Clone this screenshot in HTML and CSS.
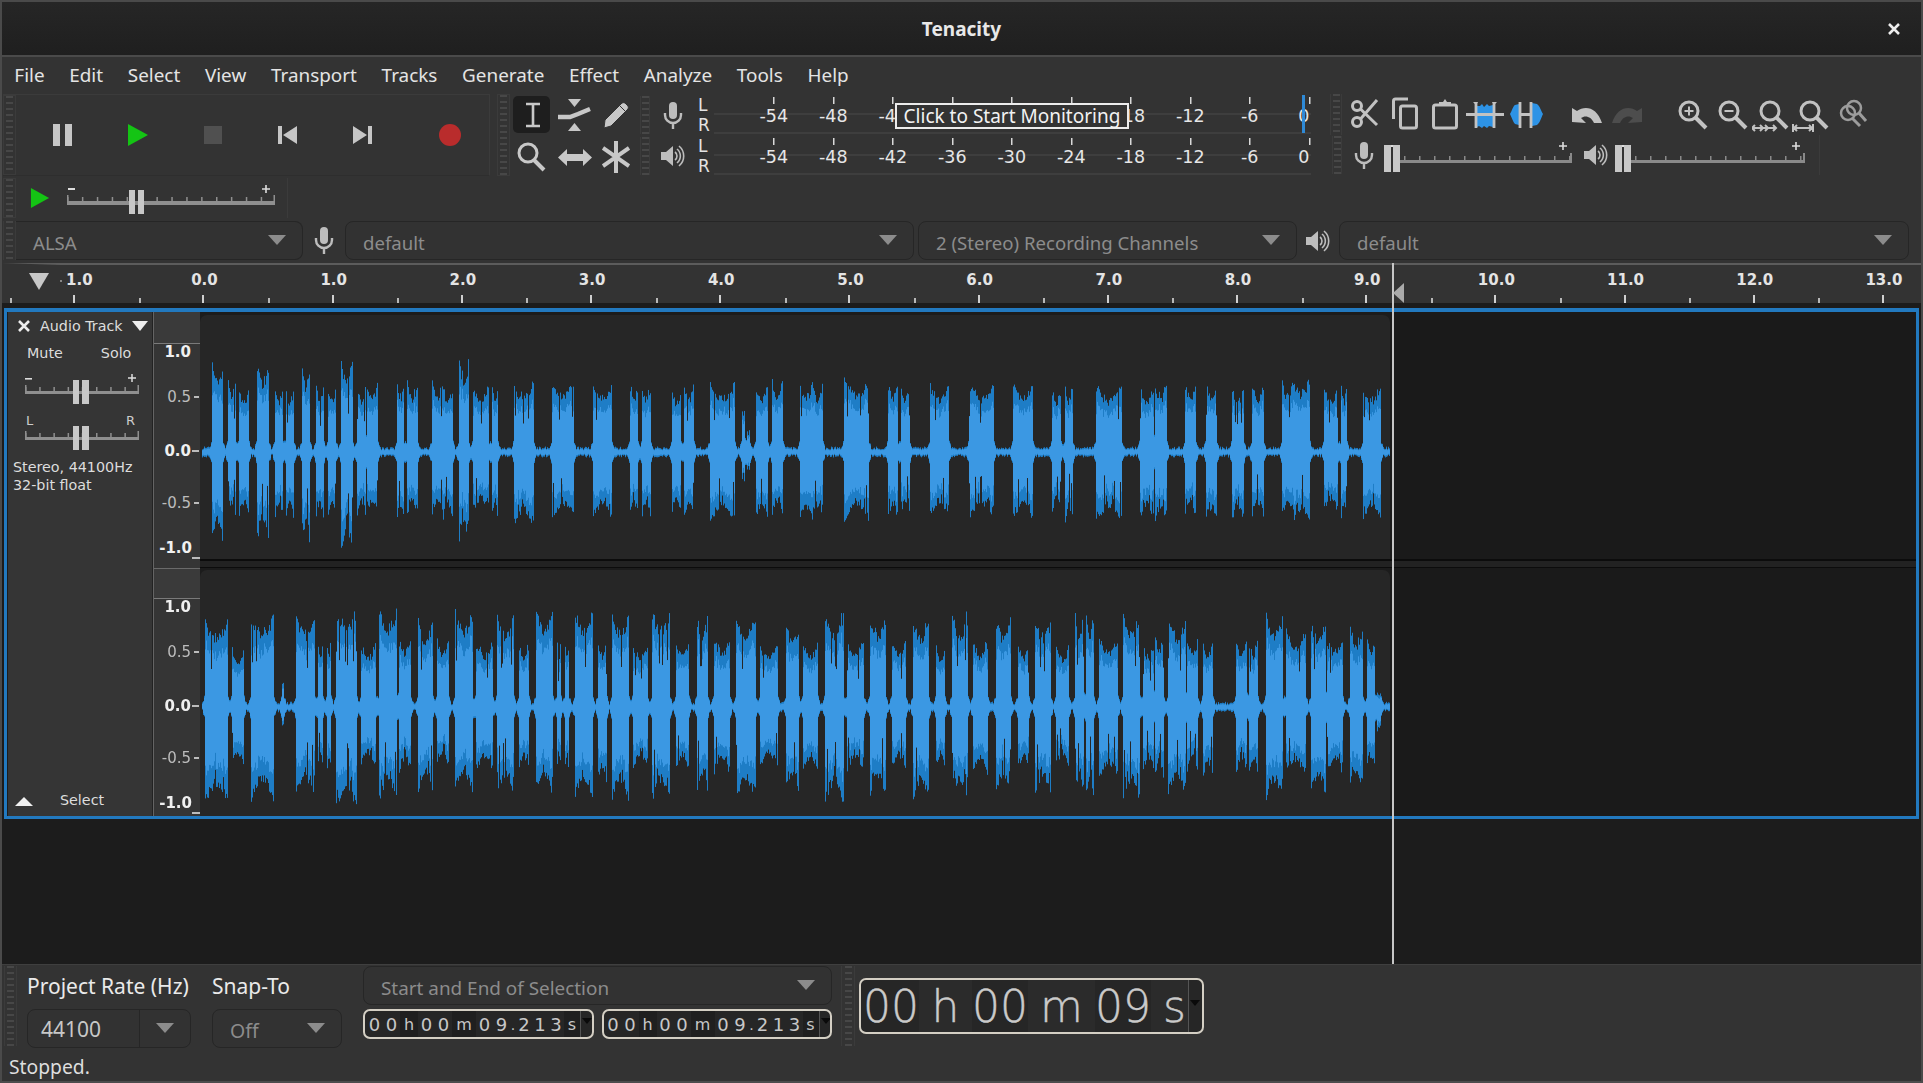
FILE: index.html
```html
<!DOCTYPE html>
<html lang="en">
<head>
<meta charset="utf-8">
<title>Tenacity</title>
<link rel="stylesheet" href="styles.css">
</head>
<body>
<svg class="sprite" aria-hidden="true">
  <symbol id="mic" viewBox="0 0 20 27">
    <rect x="6" y="0" width="8" height="17" rx="4" fill="currentColor"/>
    <path d="M2 11v2a8 8 0 0 0 16 0v-2M10 21v6" fill="none" stroke="currentColor" stroke-width="2.4"/>
  </symbol>
  <symbol id="spk" viewBox="0 0 24 24">
    <path d="M0 8h5l7-6v20l-7-6H0z" fill="currentColor"/>
    <path d="M14 8a5 5 0 0 1 0 8M16 5a9 9 0 0 1 0 14M18 2a13 13 0 0 1 0 20" fill="none" stroke="currentColor" stroke-width="1.6"/>
  </symbol>
  <symbol id="play" viewBox="0 0 20 22">
    <path d="M0 0l20 11L0 22z" fill="#14c414"/>
  </symbol>
</svg>
<div class="app">
  <header class="titlebar">
    <span class="title">Tenacity</span>
    <svg class="close" viewBox="0 0 12 12"><path d="M1 1l10 10M11 1L1 11" stroke="currentColor" stroke-width="2.6" fill="none"/></svg>
  </header>
  <nav class="menubar">
    <span>File</span><span>Edit</span><span>Select</span><span>View</span><span>Transport</span><span>Tracks</span><span>Generate</span><span>Effect</span><span>Analyze</span><span>Tools</span><span>Help</span>
  </nav>

  <div class="toprow">
    <div class="toolbar transport">
      <div class="grip"></div>
      <div class="tbtns">
        <div class="tbtn"><svg width="19" height="22" viewBox="0 0 19 22"><path d="M0 0h7v22H0zM12 0h7v22h-7z" fill="#c6c6c6"/></svg></div>
        <div class="tbtn"><svg width="20" height="22"><use href="#play"/></svg></div>
        <div class="tbtn"><svg width="18" height="18" viewBox="0 0 18 18"><rect width="18" height="18" fill="#505050"/></svg></div>
        <div class="tbtn"><svg width="19" height="18" viewBox="0 0 19 18"><path d="M0 0h4v18H0zM19 0v18L5 9z" fill="#c6c6c6"/></svg></div>
        <div class="tbtn"><svg width="19" height="18" viewBox="0 0 19 18"><path d="M15 0h4v18h-4zM0 0v18l14-9z" fill="#c6c6c6"/></svg></div>
        <div class="tbtn rec"><svg width="22" height="22" viewBox="0 0 22 22"><circle cx="11" cy="11" r="11" fill="#b92c2c"/></svg></div>
      </div>
    </div>
    <div class="toolbar tools">
      <div class="grip"></div>
      <div class="toolgrid">
        <div class="tool active"><svg width="16" height="26" viewBox="0 0 16 26"><path d="M1 2h14M1 24h14M8 2v22" stroke="currentColor" stroke-width="2.6" fill="none"/></svg></div>
        <div class="tool"><svg width="36" height="34" viewBox="0 0 36 34"><path d="M11 1h13l-6.500 8zM11 33h13l-6.500-8z" fill="currentColor"/><path d="M1 19h12l8-3 12-5" stroke="currentColor" stroke-width="4.400" fill="none"/></svg></div>
        <div class="tool"><svg width="28" height="28" viewBox="0 0 28 28"><path d="M3 19L19 3a3 3 0 0 1 5 0l1 1a3 3 0 0 1 0 5L9 25l-7 2zM18 5l5 5" fill="currentColor" stroke="#333" stroke-width="1"/></svg></div>
        <div class="tool lens"><svg width="30" height="30" viewBox="0 0 30 30"><circle cx="12" cy="11" r="9" fill="none" stroke="currentColor" stroke-width="3"/><path d="M18 18l10 10" stroke="currentColor" stroke-width="4" fill="none"/></svg></div>
        <div class="tool"><svg width="34" height="17" viewBox="0 0 34 17"><path d="M0 8.500L9 0v5h16V0l9 8.500L25 17v-5H9v5z" fill="currentColor"/></svg></div>
        <div class="tool"><svg width="28" height="32" viewBox="0 0 28 32"><path d="M14 0v32M1 7l26 18M27 7L1 25" stroke="currentColor" stroke-width="4" fill="none"/></svg></div>
      </div>
    </div>
    <div class="rightstack">
      <div class="stackrow">
        <div class="meter">
          <div class="grip meter-grip"></div>
          <div class="meter-icon"><svg width="20" height="27"><use href="#mic"/></svg></div>
          <div class="lr"><span>L</span><span>R</span></div>
          <div class="scale">
            <span>-54</span><span>-48</span><span>-42</span><span>-36</span><span>-30</span><span>-24</span><span>-18</span><span>-12</span><span>-6</span><span class="zero">0</span>
            <div class="peak"></div>
            <div class="monitor">Click to Start Monitoring</div>
          </div>
        </div>
        <div class="toolbar edit">
          <div class="grip small"></div>
          <div class="editbtns">
            <div class="ebtn"><svg width="40" height="40" viewBox="0 0 40 40"><g fill="none" stroke="currentColor" stroke-width="3"><circle cx="12" cy="12" r="4.500"/><circle cx="12" cy="28" r="4.500"/><path d="M15.500 15L32 31M15.500 25L32 6"/></g></svg></div>
            <div class="ebtn"><svg width="40" height="40" viewBox="0 0 40 40"><g fill="none" stroke="currentColor" stroke-width="3"><path d="M8.500 25V7a2 2 0 0 1 2-2H23"/><rect x="15.500" y="12" width="16" height="22" rx="2"/></g></svg></div>
            <div class="ebtn"><svg width="40" height="40" viewBox="0 0 40 40"><rect x="8.500" y="11" width="23" height="23" rx="2" fill="none" stroke="currentColor" stroke-width="3"/><path d="M14 12v-4h4l2-3 2 3h4v4z" fill="currentColor"/></svg></div>
            <div class="ebtn"><svg width="40" height="40" viewBox="0 0 40 40"><path d="M6 8h2l3 3 2-3zM34 8h-2l-3 3-2-3z" fill="currentColor"/><path d="M12 12h3l2-2 2 3 3-3 2 2 4-1v22l-4-1-2 2-3-2-2 2-3-2-2 1z" fill="#2d93e6"/><path d="M1 20.500h38M11 8v26M29 8v26" stroke="currentColor" stroke-width="2.800" fill="none"/></svg></div>
            <div class="ebtn"><svg width="40" height="40" viewBox="0 0 40 40"><path d="M5 20c2-3 3-8 5-9l4-1v21l-4-1c-2-2-3-6-5-10zM38 20c-2-3-3-8-6-10l-5-1v23l5-1c3-2 4-7 6-11z" fill="#2d93e6"/><path d="M15 8v26M26 8v26M15 20.500h11" stroke="currentColor" stroke-width="2.800" fill="none"/></svg></div>
            <div class="ebtn gap-a"><svg width="40" height="40" viewBox="0 0 40 40"><path d="M5 28V14l5 3c8-6 20-4 25 12h-8c-3-7-9-8-13-5l5 5z" fill="currentColor"/></svg></div>
            <div class="ebtn dim"><svg width="40" height="40" viewBox="0 0 40 40"><path d="M35 28V14l-5 3c-8-6-20-4-25 12h8c3-7 9-8 13-5l-5 5z" fill="currentColor"/></svg></div>
            <div class="ebtn gap-b"><svg width="40" height="40" viewBox="0 0 40 40"><g fill="none" stroke="currentColor" stroke-width="3"><circle cx="17" cy="17" r="9"/><path d="M23.500 23.500L34 34" stroke-width="4"/><path d="M17 12.500v9M12.500 17h9" stroke-width="2"/></g></svg></div>
            <div class="ebtn"><svg width="40" height="40" viewBox="0 0 40 40"><g fill="none" stroke="currentColor" stroke-width="3"><circle cx="17" cy="17" r="9"/><path d="M23.500 23.500L34 34" stroke-width="4"/><path d="M12.500 17h9" stroke-width="2"/></g></svg></div>
            <div class="ebtn"><svg width="40" height="40" viewBox="0 0 40 40"><g fill="none" stroke="currentColor" stroke-width="3"><circle cx="18" cy="17" r="9"/><path d="M24.500 23.500L35 34" stroke-width="4"/><path d="M0 34h24M3 31l-3 3 3 3M8 31l3 3-3 3M13 31l3 3-3 3M21 31l3 3-3 3" stroke-width="2"/></g></svg></div>
            <div class="ebtn"><svg width="40" height="40" viewBox="0 0 40 40"><g fill="none" stroke="currentColor" stroke-width="3"><circle cx="18" cy="17" r="9"/><path d="M24.500 23.500L35 34" stroke-width="4"/><path d="M1 30v8M1 34h20M21 30v8M5 31l-3 3 3 3M17 31l3 3-3 3" stroke-width="2"/></g></svg></div>
            <div class="ebtn soft"><svg width="40" height="40" viewBox="0 0 40 40"><g fill="none" stroke="currentColor" stroke-width="2.500"><circle cx="16" cy="19" r="7"/><circle cx="22" cy="14" r="7"/><path d="M20 24l8 8M27 19l7 8" stroke-width="3"/></g></svg></div>
          </div>
        </div>
      </div>
      <div class="stackrow">
        <div class="meter">
          <div class="grip meter-grip"></div>
          <div class="meter-icon"><svg width="24" height="24"><use href="#spk"/></svg></div>
          <div class="lr"><span>L</span><span>R</span></div>
          <div class="scale">
            <span>-54</span><span>-48</span><span>-42</span><span>-36</span><span>-30</span><span>-24</span><span>-18</span><span>-12</span><span>-6</span><span class="zero">0</span>
          </div>
        </div>
        <div class="toolbar mixer">
          <div class="grip small"></div>
          <svg class="mix-mic" width="20" height="27"><use href="#mic"/></svg>
          <svg class="fader" width="190" height="30" viewBox="0 0 190 30">
            <rect x="14" y="17" width="174" height="3" fill="#8a8a8a"/>
            <line x1="20" y1="15" x2="186" y2="15" stroke="#8a8a8a" stroke-width="4" stroke-dasharray="1.500 13.500"/>
            <rect x="186" y="10" width="2" height="8" fill="#8a8a8a"/>
            <rect x="6" y="2" width="8" height="2" fill="#ddd"/>
            <path d="M175 3h8M179 -1v8" stroke="#ddd" stroke-width="1.600"/>
            <path d="M0 2h7v27H0zM9 2h7v27H9z" fill="#c8c8c8"/>
          </svg>
          <svg class="mix-spk" width="24" height="24"><use href="#spk"/></svg>
          <svg class="fader" width="190" height="30" viewBox="0 0 190 30">
            <rect x="14" y="17" width="176" height="3" fill="#8a8a8a"/>
            <line x1="20" y1="15" x2="188" y2="15" stroke="#8a8a8a" stroke-width="4" stroke-dasharray="1.500 13.500"/>
            <rect x="188" y="10" width="2" height="8" fill="#8a8a8a"/>
            <rect x="6" y="2" width="8" height="2" fill="#ddd"/>
            <path d="M177 3h8M181 -1v8" stroke="#ddd" stroke-width="1.600"/>
            <path d="M0 2h7v27H0zM9 2h7v27H9z" fill="#c8c8c8"/>
          </svg>
        </div>
      </div>
    </div>
  </div>

  <div class="speedrow">
    <div class="toolbar speed">
      <div class="grip"></div>
      <svg class="speed-play" width="20" height="20"><use href="#play"/></svg>
      <svg class="speed-slider" width="212" height="30" viewBox="0 0 212 30">
        <rect x="2" y="15" width="208" height="4" fill="#8f8f8f"/>
        <line x1="2" y1="13" x2="210" y2="13" stroke="#8f8f8f" stroke-width="4" stroke-dasharray="1.500 13.400"/>
        <rect x="2" y="9" width="1.500" height="8" fill="#8f8f8f"/>
        <rect x="208.500" y="9" width="1.500" height="8" fill="#8f8f8f"/>
        <rect x="3" y="2" width="7" height="2" fill="#ddd"/>
        <path d="M197 3h8M201 -1v8" stroke="#ddd" stroke-width="1.600"/>
        <path d="M64 4h6v24h-6zM73 4h6v24h-6z" fill="#c8c8c8"/>
      </svg>
    </div>
  </div>

  <div class="devicerow">
    <div class="grip"></div>
    <div class="select dev-host"><span>ALSA</span><i class="arrow"></i></div>
    <div class="dev-icon"><svg width="20" height="27"><use href="#mic"/></svg></div>
    <div class="select dev-rec"><span>default</span><i class="arrow"></i></div>
    <div class="select dev-ch"><span>2 (Stereo) Recording Channels</span><i class="arrow"></i></div>
    <div class="dev-icon"><svg width="24" height="24"><use href="#spk"/></svg></div>
    <div class="select dev-out"><span>default</span><i class="arrow"></i></div>
  </div>

  <main class="timeline">
    <div class="ruler">
      <svg class="ruler-tri" width="20" height="17" viewBox="0 0 20 17"><path d="M0 0h20L10 17z" fill="#c8c8c8"/></svg>
      <div class="ruler-cells">
        <span class="first">1.0</span><span>0.0</span><span>1.0</span><span>2.0</span><span>3.0</span><span>4.0</span><span>5.0</span><span>6.0</span><span>7.0</span><span>8.0</span><span>9.0</span><span>10.0</span><span>11.0</span><span>12.0</span><span>13.0</span>
      </div>
    </div>
    <section class="panel">
      <aside class="control">
        <div class="ctl-head">
          <svg class="ctl-x" width="12" height="12" viewBox="0 0 12 12"><path d="M1 1l10 10M11 1L1 11" stroke="currentColor" stroke-width="2.600"/></svg>
          <span class="ctl-name">Audio Track</span>
          <i class="ctl-down"></i>
        </div>
        <div class="ctl-btns"><span>Mute</span><span>Solo</span></div>
        <svg class="ctl-slider" width="116" height="36" viewBox="0 0 116 36">
          <rect x="1" y="21" width="114" height="3" fill="#8f8f8f"/>
          <line x1="1" y1="19" x2="115" y2="19" stroke="#8f8f8f" stroke-width="4" stroke-dasharray="1.500 12.700"/>
          <rect x="1" y="15" width="1.500" height="8" fill="#8f8f8f"/><rect x="113.500" y="15" width="1.500" height="8" fill="#8f8f8f"/>
          <rect x="1" y="8" width="7" height="1.600" fill="#ddd"/>
          <path d="M104 8h8M108 4v8" stroke="#ddd" stroke-width="1.500"/>
          <path d="M49 10h6v24h-6zM58 10h7v24h-7z" fill="#c8c8c8"/>
        </svg>
        <div class="ctl-pan">
          <div class="ctl-lr"><span>L</span><span>R</span></div>
          <svg class="ctl-slider" width="116" height="26" viewBox="0 0 116 26">
            <rect x="1" y="11" width="114" height="3" fill="#8f8f8f"/>
            <line x1="1" y1="9" x2="115" y2="9" stroke="#8f8f8f" stroke-width="4" stroke-dasharray="1.500 12.700"/>
            <rect x="1" y="5" width="1.500" height="8" fill="#8f8f8f"/><rect x="113.500" y="5" width="1.500" height="8" fill="#8f8f8f"/>
            <path d="M49 0h6v24h-6zM58 0h7v24h-7z" fill="#c8c8c8"/>
          </svg>
        </div>
        <div class="ctl-info">Stereo, 44100Hz<br>32-bit float</div>
        <div class="ctl-foot"><i class="ctl-up"></i><span>Select</span></div>
      </aside>
      <div class="channels">
        <div class="channel ch-top">
          <div class="vruler">
            <div class="vhead"></div>
            <div class="vlabels">
              <span class="vb vnotick">1.0</span><span class="v2">0.5</span><span class="vb v3 vlong">0.0</span><span class="v4">-0.5</span><span class="vb v5 vend">-1.0</span>
            </div>
          </div>
          <div class="clip"><canvas id="wave-l" width="1190" height="244"></canvas></div>
          <div class="after"></div>
        </div>
        <div class="chsep"><div class="chsep-ruler"></div><div class="chsep-rest"></div></div>
        <div class="channel ch-bot">
          <div class="vruler">
            <div class="vhead vhead-b"></div>
            <div class="vlabels">
              <span class="vb vnotick">1.0</span><span class="v2">0.5</span><span class="vb v3 vlong">0.0</span><span class="v4">-0.5</span><span class="vb v5 vend">-1.0</span>
            </div>
          </div>
          <div class="clip"><canvas id="wave-r" width="1190" height="246"></canvas></div>
          <div class="after"></div>
        </div>
      </div>
    </section>
    <div class="cursor"></div>
    <svg class="marker" width="11" height="20" viewBox="0 0 11 20"><path d="M0 10L11 0v20z" fill="#aaa"/></svg>
  </main>

  <footer class="selbar">
    <div class="grip sel-grip"></div>
    <div class="col rate">
      <label>Project Rate (Hz)</label>
      <div class="select combo"><span class="combo-val">44100</span><span class="combo-btn"><i class="arrow"></i></span></div>
    </div>
    <div class="col snap">
      <label>Snap-To</label>
      <div class="select snap-sel"><span>Off</span><i class="arrow"></i></div>
    </div>
    <div class="col selection">
      <div class="select sel-mode"><span>Start and End of Selection</span><i class="arrow"></i></div>
      <div class="times">
        <div class="tc"><b>0</b><b>0</b><u class="h">h</u><b>0</b><b>0</b><u class="m">m</u><b>0</b><b>9</b><em>.</em><b class="dec">2</b><b class="dec">1</b><b class="dec">3</b><u class="s">s</u><i></i></div>
        <div class="tc"><b>0</b><b>0</b><u class="h">h</u><b>0</b><b>0</b><u class="m">m</u><b>0</b><b>9</b><em>.</em><b class="dec">2</b><b class="dec">1</b><b class="dec">3</b><u class="s">s</u><i></i></div>
      </div>
    </div>
    <div class="grip big-grip"></div>
    <div class="tc tc-big"><b>0</b><b>0</b><u class="h">h</u><b>0</b><b>0</b><u class="m">m</u><b>0</b><b>9</b><u class="s">s</u><i></i></div>
  </footer>
  <div class="status">Stopped.</div>
</div>
<script src="script.js"></script>
</body>
</html>
```

FILE: styles.css
```css
* { box-sizing: border-box; }
html, body { margin: 0; padding: 0; background: #333; }
body { width: 1923px; height: 1083px; overflow: hidden; font-family: "Noto Sans", sans-serif; color: #e2e2e2; }
i, u, em, b { font-style: normal; text-decoration: none; font-weight: normal; }
.sprite { position: absolute; width: 0; height: 0; }

.app { width: 1923px; height: 1083px; display: flex; flex-direction: column; border: 2px solid #4a4a4a; border-bottom-color: #4c4c4c; background: #333; overflow: hidden; }

.titlebar { height: 55px; flex: none; display: flex; align-items: center; justify-content: center; position: relative; background: linear-gradient(#262626, #1f1f1f); border-bottom: 2px solid #4a4a4a; }
.title { font-size: 19px; font-weight: 700; color: #e8e8e8; }
.close { position: absolute; right: 21px; top: 21px; width: 12px; height: 12px; color: #eee; }

.menubar { height: 36px; flex: none; display: flex; align-items: center; font-size: 18.900px; color: #e4e4e4; margin-bottom: 1px; }
.menubar span { padding: 0 12.350px; }

.grip { width: 13px; flex: none; background: repeating-linear-gradient(#474747 0 2px, transparent 2px 6px) center / 7px 100% no-repeat; border: 1px solid #3b3b3b; }
.toolbar { display: flex; }

.toprow { height: 82px; flex: none; display: flex; }
.transport { width: 487px; margin-left: 1px; border-right: 1px solid #3b3b3b; border-top: 1px solid #3b3b3b; border-bottom: 1px solid #2e2e2e; flex: none; }
.tbtns { display: flex; padding-left: 9px; align-items: center; }
.tbtn { width: 75px; display: flex; justify-content: center; }
.tbtn.rec { margin-left: 12px; }

.tools { width: 143px; margin-left: 7px; flex: none; }
.toolgrid { display: grid; grid-template-columns: repeat(3, 41px); grid-template-rows: 37px 38px; row-gap: 5px; padding: 2px 0 0 3px; color: #c8c8c8; }
.tool { display: flex; align-items: center; justify-content: center; border-radius: 5px; }
.tool.active { background: #1e1e1e; margin-right: 4px; padding-left: 3px; }
.tool.lens { padding-right: 5px; }

.rightstack { display: flex; flex-direction: column; flex: none; }
.stackrow { height: 41px; display: flex; }

.meter { width: 680px; height: 38px; margin-top: 2px; display: flex; flex: none; }
.meter-grip { width: 10px; border-width: 0 1px; }
.meter-icon { width: 46px; flex: none; display: flex; align-items: center; justify-content: center; color: #bdbdbd; }
.lr { width: 18px; flex: none; display: flex; flex-direction: column; padding-left: 2px; margin-top: -1px; font: 17px/20px "DejaVu Sans", sans-serif; color: #e4e4e4; }
.scale { width: 597px; flex: none; position: relative; display: grid; grid-template-columns: repeat(10, 59.500px); padding-left: 30px; font: 17.500px/19px "DejaVu Sans", sans-serif; color: #e6e6e6; background: linear-gradient(#3e3e3e, #3e3e3e) 0 17px / 100% 2px no-repeat, linear-gradient(#3e3e3e, #3e3e3e) 0 100% / 100% 2px no-repeat; }
.scale span { text-align: center; padding-top: 11px; background: linear-gradient(#d8d8d8, #d8d8d8) center 1px / 1.500px 7px no-repeat; }
.scale span.zero { text-indent: -11px; }
.peak { position: absolute; left: 588px; top: -1px; width: 3px; height: 38px; background: #2f8ad6; }
.monitor { position: absolute; left: 181px; top: 7px; width: 234px; height: 26px; border: 2px solid #ececec; background: #333; color: #f2f2f2; font: 19px/22px "Noto Sans", sans-serif; text-align: center; white-space: nowrap; }

.edit { margin-left: 10px; flex: none; }
.grip.small { width: 12px; border-width: 0 1px; }
.editbtns { display: flex; padding-left: 3px; }
.ebtn { width: 40px; height: 40px; flex: none; color: #c2c2c2; }
.ebtn.dim { color: #4d4d4d; }
.ebtn.soft { color: #9c9c9c; }
.gap-a { margin-left: 22px; }
.gap-b { margin-left: 25px; }

.mixer { margin-left: 12px; width: 488px; height: 40px; flex: none; border-right: 1px solid #3b3b3b; align-items: center; }
.mixer .grip { height: 38px; width: 10px; }
.mix-mic { margin-left: 12px; color: #bdbdbd; flex: none; }
.mixer .fader { margin-left: 10px; flex: none; margin-top: 5px; overflow: visible; }
.mix-spk { margin-left: 10px; color: #bdbdbd; flex: none; }
.mixer .mix-spk + .fader { margin-left: 7px; }

.speedrow { height: 40px; margin-top: 2px; flex: none; display: flex; }
.speed { width: 285px; margin-left: 1px; align-items: center; border-right: 1px solid #3b3b3b; }
.speed .grip { height: 40px; }
.speed-play { margin-left: 14px; flex: none; }
.speed-slider { margin-left: 15px; flex: none; margin-top: 5px; overflow: visible; }

.devicerow { height: 39px; margin-top: 3px; flex: none; display: flex; padding-left: 1px; }
.devicerow .grip { height: 39px; width: 13px; border-width: 0 1px; }
.select { height: 39px; display: flex; align-items: center; justify-content: space-between; flex: none; border: 1px solid #262626; border-radius: 8px; background: #323232; color: #8c8c8c; font-size: 18.600px; padding: 0 16px 0 17px; }
.select span { padding-top: 4px; }
.arrow { display: block; flex: none; width: 0; height: 0; margin-bottom: 2px; border-left: 9px solid transparent; border-right: 9px solid transparent; border-top: 10px solid #8c8c8c; }
.dev-host { width: 287px; border-left: 0; border-radius: 0 8px 8px 0; padding-left: 17px; }
.dev-icon { width: 42px; flex: none; display: flex; justify-content: center; align-items: center; color: #bdbdbd; }
.dev-rec { width: 569px; }
.dev-ch { width: 379px; margin-left: 4px; }
.dev-out { width: 570px; }

.timeline { height: 701px; margin-top: 3px; flex: none; position: relative; background: #1c1c1c; }
.ruler { height: 40px; position: relative; background: #333; border-top: 2px solid #5c5c5c; border-left: 58px solid #333; }
.ruler-tri { position: absolute; left: -31px; top: 8px; }
.ruler-cells { display: grid; grid-template-columns: repeat(15, 129.200px); margin-left: -50.300px; height: 38px; font: bold 15px/30px "DejaVu Sans", sans-serif; color: #e4e4e4; text-align: center; width: 1911px; overflow: hidden; }
.ruler-cells span { padding-left: 2px; background: linear-gradient(#d0d0d0, #d0d0d0) center bottom / 2px 8px no-repeat, linear-gradient(#b8b8b8, #b8b8b8) left bottom / 2px 5px no-repeat; }
.ruler-cells span.first { padding-left: 10px; }
.ruler-cells span.first::before { content: ""; display: inline-block; width: 2px; height: 2px; margin: 0 4px 3px -6px; background: #888; }

.panel { margin: 5px 2px 0 2px; height: 511px; display: flex; border: solid #2279bf; border-width: 4px 3px 3px 3px; padding-left: 1px; background: #1c1c1c; }
.control { width: 145px; flex: none; display: flex; flex-direction: column; background: #353535; border-right: 1px solid #222; font: 14.300px/18px "DejaVu Sans", sans-serif; color: #ddd; }
.ctl-head { height: 24px; margin-top: 2px; flex: none; display: flex; align-items: center; padding-left: 10px; }
.ctl-x { color: #eee; flex: none; }
.ctl-name { margin-left: 10px; }
.ctl-down { margin-left: 9px; width: 0; height: 0; border-left: 8px solid transparent; border-right: 8px solid transparent; border-top: 10px solid #eee; }
.ctl-btns { height: 18px; margin-top: 6px; flex: none; display: flex; padding-left: 19px; }
.ctl-btns span + span { margin-left: 38px; }
.ctl-slider { display: block; margin-left: 16px; flex: none; overflow: visible; }
.control > .ctl-slider { margin-top: 8px; }
.ctl-pan { margin-top: 8px; flex: none; }
.ctl-lr { display: flex; justify-content: space-between; padding: 0 17px 0 18px; height: 14px; font-size: 13px; line-height: 14px; margin-bottom: -2px; color: #ccc; }
.ctl-info { margin: 6px 0 0 5px; line-height: 18px; flex: none; }
.ctl-foot { margin-top: auto; height: 22px; margin-bottom: 5px; display: flex; align-items: center; padding-left: 7px; }
.ctl-up { width: 0; height: 0; border-left: 9px solid transparent; border-right: 9px solid transparent; border-bottom: 9px solid #f0f0f0; margin-top: 3px; }
.ctl-foot span { margin-left: 27px; }

.channels { flex: 1; display: flex; flex-direction: column; min-width: 0; }
.channel { display: flex; flex: none; }
.ch-top { height: 247px; }
.ch-bot { height: 248px; }
.vruler { width: 47px; flex: none; display: flex; flex-direction: column; background: #353535; border-left: 1px solid #646464; font: 15px/16px "DejaVu Sans", sans-serif; color: #bcbcbc; }
.vhead { height: 32px; flex: none; background: #3a3a3a; border-bottom: 1px solid #7a7a7a; }
.vhead-b { height: 31px; border-top: 1px solid #6a6a6a; }
.vlabels { display: flex; flex-direction: column; align-items: flex-end; }
.vlabels span { height: 16px; display: flex; align-items: center; }
.vlabels span::after { content: ""; width: 5px; height: 1.500px; margin: 0 1px 0 3px; background: #bcbcbc; }
.vlabels .vb { font-weight: bold; color: #f0f0f0; }
.vlabels .vnotick::after { background: transparent; }
.vlabels .vlong::after { width: 7px; margin-left: 1px; }
.vlabels .vend::after { width: 8px; margin-left: 0; margin-right: 0; transform: translateY(10px); }
.vlabels .v2 { margin-top: 29px; }
.vlabels .v3 { margin-top: 38px; }
.vlabels .v4 { margin-top: 36px; }
.vlabels .v5 { margin-top: 29px; }
.clip { width: 1190px; flex: none; margin-top: 3px; background: #262626; border-radius: 7px 7px 0 0; overflow: hidden; }
.clip canvas { display: block; }
.ch-bot .clip { margin-top: 2px; }
.after { flex: 1; background: #1a1a1a; }
.chsep { height: 9px; flex: none; display: flex; background: #222; border-top: 2px solid #0c0c0c; border-bottom: 1px solid #0c0c0c; }
.chsep-ruler { width: 47px; flex: none; background: #353535; border-left: 1px solid #646464; margin: -2px 0 -1px; }
.chsep-rest { flex: 1; }

.cursor { position: absolute; left: 1390px; top: 0; bottom: 0; width: 2px; background: #c6c6c6; }
.marker { position: absolute; left: 1391px; top: 20px; }

.selbar { height: 86px; flex: none; display: flex; align-items: flex-start; background: #333; border-top: 1px solid #3f3f3f; }
.sel-grip { margin: 1px 0 0 2px; width: 13px; height: 80px; border-width: 0 1px; }
.col { flex: none; }
.col label { display: block; height: 24px; margin-top: 9px; font-size: 21px; line-height: 24px; color: #eaeaea; white-space: nowrap; }
.col .select { margin-top: 11px; }
.rate { width: 164px; margin-left: 10px; }
.snap { width: 130px; margin-left: 21px; }
.combo { padding: 0; color: #c8c8c8; overflow: hidden; font-size: 21px; }
.combo-val { width: 112px; height: 100%; border-right: 1px solid #262626; padding: 2px 0 0 13px !important; line-height: 34px; }
.combo-btn { flex: 1; display: flex; justify-content: center; align-items: center; padding: 0 !important; }
.snap-sel { color: #8c8c8c; padding-right: 16px; font-size: 19.500px; }
.selection { width: 469px; margin-left: 21px; }
.selection .sel-mode { margin-top: 1px; font-size: 18.900px; }
.sel-mode span { padding-top: 5px; }
.times { display: flex; gap: 8px; margin-top: 4px; }
.tc { width: 231px; height: 30px; display: flex; align-items: stretch; padding-left: 1px; border: 2px solid #d4cfc4; border-radius: 7px; background: #262626; font: 18px/28px "DejaVu Sans", sans-serif; color: #c8c8c8; overflow: hidden; }
.tc b { width: 17px; text-align: center; flex: none; }
.tc b.dec { width: 16px; }
.tc u { text-align: center; flex: none; background: #1f1f1f; font-size: 16px; }
.tc u.h { width: 18px; }
.tc u.m { width: 24px; }
.tc u.s { width: 16px; }
.tc em { width: 6px; flex: none; text-align: center; font-size: 14px; }
.tc i { flex: 1; position: relative; border-left: 1px solid #555; }
.tc i::after { content: ""; position: absolute; left: 1px; top: 7px; border-left: 5px solid transparent; border-right: 5px solid transparent; border-top: 6px solid #0a0a0a; }
.big-grip { width: 14px; height: 80px; margin: 1px 0 0 9px; border-width: 0 1px; }
.tc-big { width: 345px; height: 56px; margin: 13px 0 0 4px; padding-left: 2px; font-size: 44px; font-weight: 200; line-height: 54px; color: #cacaca; -webkit-text-stroke: 0.4px #cacaca; }
.tc-big b { width: 28px; font-weight: 200; }
.tc-big u { font-size: 44px; background: #2b2b2b; font-weight: 200; }
.tc-big u.h { width: 53px; }
.tc-big u.m { width: 67px; }
.tc-big u.s { width: 37px; text-align: right; padding-right: 2px; }
.tc-big i::after { top: 20px; }

.status { height: 31px; flex: none; display: flex; align-items: center; padding: 2px 0 0 7px; font-size: 19.300px; color: #dedede; background: #333; }
```

FILE: script.js
```js
// Peak envelopes of the two recorded channels: [startX, endX, peakAbove, peakBelow]
var LEFT = [[212,222,90,90],[228,235,74,65],[239,248,65,66],[257,268,90,90],[275,282,67,66],[286,293,65,68],[302,309,84,91],[316,323,67,68],[328,335,67,65],[341,352,93,100],[357,365,66,66],[367,377,69,63],[397,403,70,70],[407,417,70,65],[432,442,72,65],[443,452,66,68],[459,468,93,91],[473,488,68,61],[492,497,66,65],[514,533,69,76],[552,573,73,68],[593,611,70,68],[630,637,68,65],[642,650,68,66],[672,680,63,62],[684,693,68,69],[710,734,71,71],[742,744,46,30],[747,749,22,20],[756,767,68,67],[772,782,73,64],[800,812,71,71],[812,822,70,70],[844,868,75,70],[888,897,71,67],[901,909,69,63],[930,948,69,65],[969,993,70,67],[1013,1032,70,68],[1052,1060,65,61],[1065,1072,67,71],[1096,1121,67,71],[1140,1153,67,68],[1155,1166,69,71],[1185,1195,70,66],[1206,1216,71,72],[1232,1243,66,69],[1252,1263,67,66],[1282,1292,72,66],[1292,1309,76,75],[1324,1337,66,61],[1341,1346,66,69],[1363,1380,66,69]];
var RIGHT = [[205,227,89,100],[232,243,60,61],[251,273,95,95],[282,283,25,20],[296,314,95,93],[318,322,67,61],[327,330,67,63],[336,356,102,103],[361,375,64,60],[379,396,100,96],[399,410,70,66],[418,432,87,86],[437,448,69,61],[455,472,99,88],[476,492,67,66],[497,513,94,88],[519,528,65,65],[536,552,99,90],[557,560,65,61],[565,568,62,63],[575,592,99,93],[598,606,67,78],[612,628,95,95],[633,647,64,63],[652,669,99,95],[676,688,67,63],[697,707,92,86],[714,729,70,68],[736,755,94,93],[760,777,64,61],[786,798,84,86],[803,817,65,66],[825,843,95,98],[847,863,69,65],[870,885,94,90],[892,905,67,63],[913,928,89,95],[936,944,62,61],[952,967,94,93],[973,987,67,68],[996,1010,90,90],[1018,1028,64,63],[1035,1050,89,90],[1056,1068,62,61],[1075,1083,94,88],[1086,1093,95,95],[1099,1117,72,73],[1123,1139,94,95],[1143,1153,65,65],[1155,1163,75,71],[1168,1185,90,90],[1187,1197,69,65],[1203,1212,67,71],[1236,1246,69,68],[1249,1257,67,68],[1266,1282,94,95],[1286,1305,79,70],[1311,1325,87,90],[1327,1342,70,68],[1350,1362,82,83],[1367,1374,69,63],[1377,1380,15,25]];

var ORIGIN = 200, ZERO = 137, OUTER = "#1e7dc6", INNER = "#3b98e3";

function prng(seed) {
  return function () {
    seed = (seed * 16807) % 2147483647;
    return seed / 2147483647;
  };
}

function drawWave(id, bursts, seed) {
  var canvas = document.getElementById(id);
  var ctx = canvas.getContext("2d");
  var rand = prng(seed);
  var w = canvas.width;
  for (var px = 2; px < w; px++) {
    var x = px + ORIGIN;
    var hit = null;
    for (var i = 0; i < bursts.length; i++) {
      if (x >= bursts[i][0] && x <= bursts[i][1]) { hit = bursts[i]; break; }
    }
    var up, down, inUp, inDown;
    if (hit) {
      var u = (x - hit[0]) / Math.max(1, hit[1] - hit[0]);
      var shape = 0.8 + 0.2 * Math.pow(Math.abs(2 * u - 1), 1.5);
      up = hit[2] * shape * (0.86 + 0.14 * rand());
      down = hit[3] * shape * (0.86 + 0.14 * rand());
      if (rand() < 0.12) { up *= 1.06; }
      if (rand() < 0.12) { down *= 0.85; }
      var edge = (hit[1] - hit[0] > 6) ? Math.min(1, Math.min(u, 1 - u) * 12 + 0.85) : 1;
      inUp = up * (0.7 + 0.1 * rand()) * edge;
      inDown = down * (0.7 + 0.1 * rand()) * edge;
      // Thin notches that run in from the peak towards the centre.
      if (rand() < 0.05) { down *= 0.5; inDown = Math.min(inDown, down); }
      if (rand() < 0.05) { up *= 0.55; inUp = Math.min(inUp, up); }
    } else {
      up = 2.5 + rand() * 3;
      down = 2.5 + rand() * 3;
      inUp = up * 0.65;
      inDown = down * 0.65;
      for (var j = 0; j < bursts.length; j++) {
        var d = Math.min(Math.abs(x - bursts[j][0]), Math.abs(x - bursts[j][1]));
        if (d < 3) {
          var bump = (3 - d) * 3;
          inUp += bump;
          inDown += bump;
          up += bump;
          down += bump;
        }
      }
    }
    ctx.fillStyle = OUTER;
    ctx.fillRect(px, ZERO - up, 1, up + down);
    ctx.fillStyle = INNER;
    ctx.fillRect(px, ZERO - inUp, 1, inUp + inDown);
  }
}

drawWave("wave-l", LEFT, 4242);
drawWave("wave-r", RIGHT, 90210);
```
